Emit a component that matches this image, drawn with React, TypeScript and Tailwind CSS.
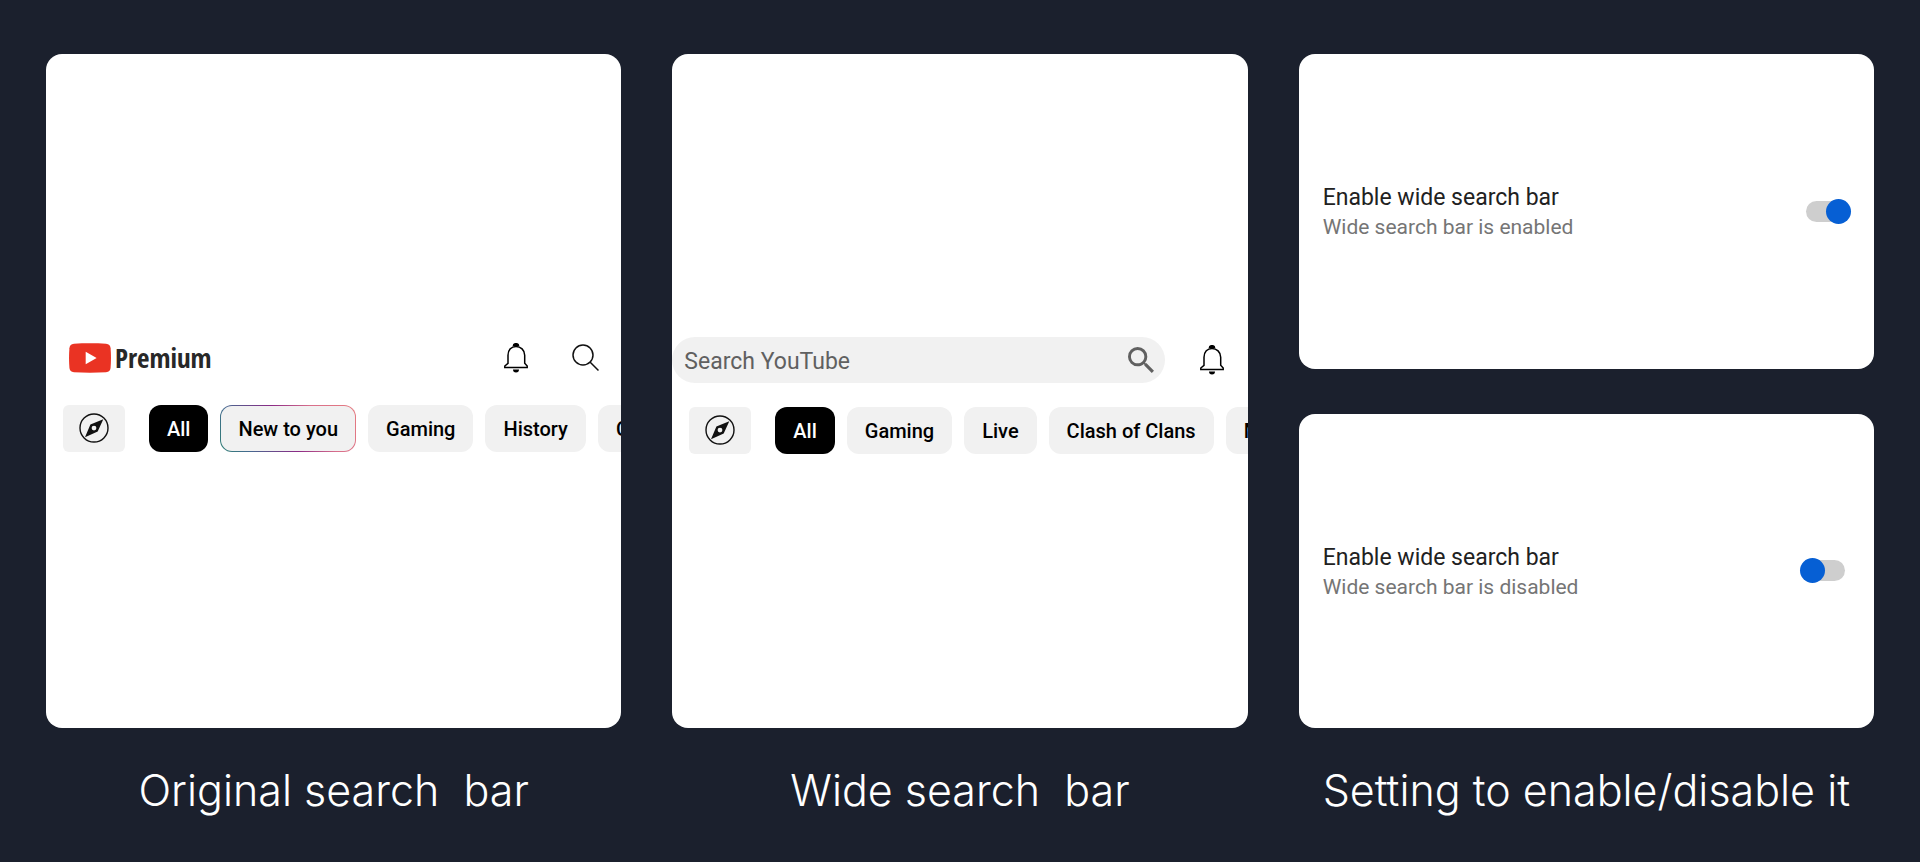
import type { ReactNode } from "react";

function BellIcon() {
  return (
    <svg viewBox="0 0 24 30" className="h-[30px] w-6 shrink-0" aria-hidden="true">
      <path d="M8.6 3.2a3.4 3.3 0 0 1 6.8 0z" fill="#000" />
      <path
        d="M4 20.3v-8.1C4 7 7.4 3.4 12 3.4s8.700 3.600 8.700 8.800v8.100l2.500 2.700v1.600H.8V23z"
        fill="none"
        stroke="#000"
        strokeWidth="1.5"
      />
      <path d="M9 26.600h6a3 3 0 0 1-6 0z" fill="#000" />
    </svg>
  );
}

function CompassIcon() {
  return (
    <svg viewBox="0 0 30 30" className="h-[30px] w-[30px]" aria-hidden="true">
      <circle cx="15" cy="15" r="14" fill="none" stroke="#111" strokeWidth="1.4" />
      <path
        fillRule="evenodd"
        fill="#111"
        d="M24.300 6.200 11.400 11.600 6 24.200l12.700-5.600zM15 12.700a2.400 2.400 0 1 1 0 4.800 2.400 2.400 0 0 1 0-4.800z"
      />
    </svg>
  );
}

function OutlineSearchIcon() {
  return (
    <svg viewBox="0 0 28 28" className="h-7 w-7" aria-hidden="true">
      <g fill="none" stroke="#111" strokeWidth="1.500">
        <circle cx="11" cy="11" r="10" />
        <path d="m18 18 8.500 8.500" />
      </g>
    </svg>
  );
}

function SolidSearchIcon() {
  return (
    <svg viewBox="3 3 17.500 17.500" className="h-[26px] w-[26px]" fill="#606060" aria-hidden="true">
      <path d="M15.500 14h-.79l-.28-.27A6.471 6.471 0 0 0 16 9.500 6.500 6.500 0 1 0 9.500 16c1.610 0 3.090-.59 4.230-1.570l.27.28v.79l5 4.990L20.490 19l-4.990-5zm-6 0C7.010 14 5 11.990 5 9.500S7.010 5 9.500 5 14 7.010 14 9.500 11.990 14 9.500 14z" />
    </svg>
  );
}

function PlayLogo() {
  return (
    <svg viewBox="0 0 42 30" className="h-[30px] w-[42px]" aria-hidden="true">
      <path
        d="M5 .8C15 .2 27 .2 37 .8c3 .2 4.300 1.700 4.600 4.500.5 6.400.5 13 0 19.400-.3 2.800-1.600 4.300-4.600 4.500-10 .6-22 .6-32 0-3-.2-4.300-1.700-4.600-4.500-.5-6.400-.5-13 0-19.400C.7 2.500 2 1 5 .8z"
        fill="#ea3323"
      />
      <path d="M16.700 8.800 27.600 15l-10.900 6.200z" fill="#fff" />
    </svg>
  );
}

type ChipKind = "plain" | "selected" | "new";

const chipStyles: Record<ChipKind, string> = {
  plain: "bg-[#f1f1f1] text-black border-transparent",
  selected: "bg-black text-white border-transparent",
  new: "text-black border-transparent [background:linear-gradient(#f1f1f1,#f1f1f1)_padding-box,linear-gradient(60deg,#2f7f74,#456a90_18%,#8b2a86_48%,#d9708c_72%,#e57b80)_border-box]",
};

function Chip({ label, kind = "plain" }: { label: string; kind?: ChipKind }) {
  return (
    <button
      type="button"
      className={`h-[47px] shrink-0 whitespace-nowrap rounded-xl border px-[17px] pt-0.5 text-[20px] font-medium ${chipStyles[kind]}`}
    >
      {label}
    </button>
  );
}

function ChipRow({ chips }: { chips: { label: string; kind?: ChipKind }[] }) {
  return (
    <div className="flex gap-3 overflow-hidden pl-[17px]">
      <button
        type="button"
        aria-label="Explore"
        className="mr-3 flex h-[47px] w-[62px] shrink-0 items-center justify-center rounded-md bg-[#f1f1f1]"
      >
        <CompassIcon />
      </button>
      {chips.map((chip) => (
        <Chip key={chip.label} {...chip} />
      ))}
    </div>
  );
}

function Panel({ caption, children }: { caption: string; children: ReactNode }) {
  return (
    <figure className="flex min-w-0 flex-col">
      <div className="flex flex-1 flex-col gap-[45px]">{children}</div>
      <figcaption className="flex h-[134px] justify-center whitespace-pre pt-9 font-['Inter',sans-serif] text-[43px] font-light leading-[52px] text-white">
        {caption}
      </figcaption>
    </figure>
  );
}

function Card({ children }: { children: ReactNode }) {
  return (
    <div className="flex flex-1 flex-col justify-center overflow-hidden rounded-2xl bg-white">
      {children}
    </div>
  );
}

function SettingRow({ id, enabled }: { id: string; enabled: boolean }) {
  return (
    <label
      htmlFor={id}
      className={`flex items-center justify-between pl-6 ${enabled ? "pr-[23px]" : "pr-[29px]"}`}
    >
      <span className="flex flex-col pt-0.5">
        <span className="text-[23px] leading-[30px] text-[#212121]">Enable wide search bar</span>
        <span className="text-[21px] leading-7 text-[#757575]">
          Wide search bar is {enabled ? "enabled" : "disabled"}
        </span>
      </span>
      <span className="relative flex h-[25px] w-[45px] items-center">
        <input
          id={id}
          type="checkbox"
          role="switch"
          defaultChecked={enabled}
          className="peer h-[21px] w-[39px] appearance-none rounded-full bg-[#cecece] checked:ml-0 not-checked:ml-[6px]"
        />
        <span className="pointer-events-none absolute left-0 top-0 h-[25px] w-[25px] rounded-full bg-[#065fd4] peer-checked:left-5" />
      </span>
    </label>
  );
}

export default function App() {
  return (
    <main className="grid min-h-screen grid-cols-3 gap-[51px] bg-[#1b202d] px-[46px] pt-[54px] font-['Roboto',sans-serif]">
      <Panel caption="Original search  bar">
        <Card>
          <div className="flex flex-col gap-8 pt-3">
            <div className="flex h-[30px] items-center pl-[23px] pr-[21px]">
              <a href="#home" className="mr-auto flex items-center gap-1">
                <PlayLogo />
                <span className="font-['Noto_Sans_ExtraCondensed','Open_Sans_Condensed','Roboto_Condensed','Liberation_Sans_Narrow',sans-serif] text-[27px] font-bold leading-[30px] text-[#282828]">
                  Premium
                </span>
              </a>
              <button type="button" aria-label="Notifications">
                <BellIcon />
              </button>
              <button type="button" aria-label="Search" className="ml-11">
                <OutlineSearchIcon />
              </button>
            </div>
            <ChipRow
              chips={[
                { label: "All", kind: "selected" },
                { label: "New to you", kind: "new" },
                { label: "Gaming" },
                { label: "History" },
                { label: "Clash of Clans" },
              ]}
            />
          </div>
        </Card>
      </Panel>

      <Panel caption="Wide search  bar">
        <Card>
          <div className="flex flex-col gap-6 pt-2">
            <div className="flex items-center gap-[35px] pr-6">
              <div className="flex h-[46px] min-w-0 flex-1 items-center rounded-full bg-[#f1f1f1] pl-3 pr-[11px]">
                <input
                  type="search"
                  aria-label="Search YouTube"
                  placeholder="Search YouTube"
                  className="min-w-0 flex-1 bg-transparent pt-1 text-[23px] leading-8 outline-none placeholder:text-[#606060]"
                />
                <button type="button" aria-label="Search">
                  <SolidSearchIcon />
                </button>
              </div>
              <button type="button" aria-label="Notifications">
                <BellIcon />
              </button>
            </div>
            <ChipRow
              chips={[
                { label: "All", kind: "selected" },
                { label: "Gaming" },
                { label: "Live" },
                { label: "Clash of Clans" },
                { label: "Music" },
              ]}
            />
          </div>
        </Card>
      </Panel>

      <Panel caption="Setting to enable/disable it">
        <Card>
          <SettingRow id="wide-on" enabled />
        </Card>
        <Card>
          <SettingRow id="wide-off" enabled={false} />
        </Card>
      </Panel>
    </main>
  );
}
